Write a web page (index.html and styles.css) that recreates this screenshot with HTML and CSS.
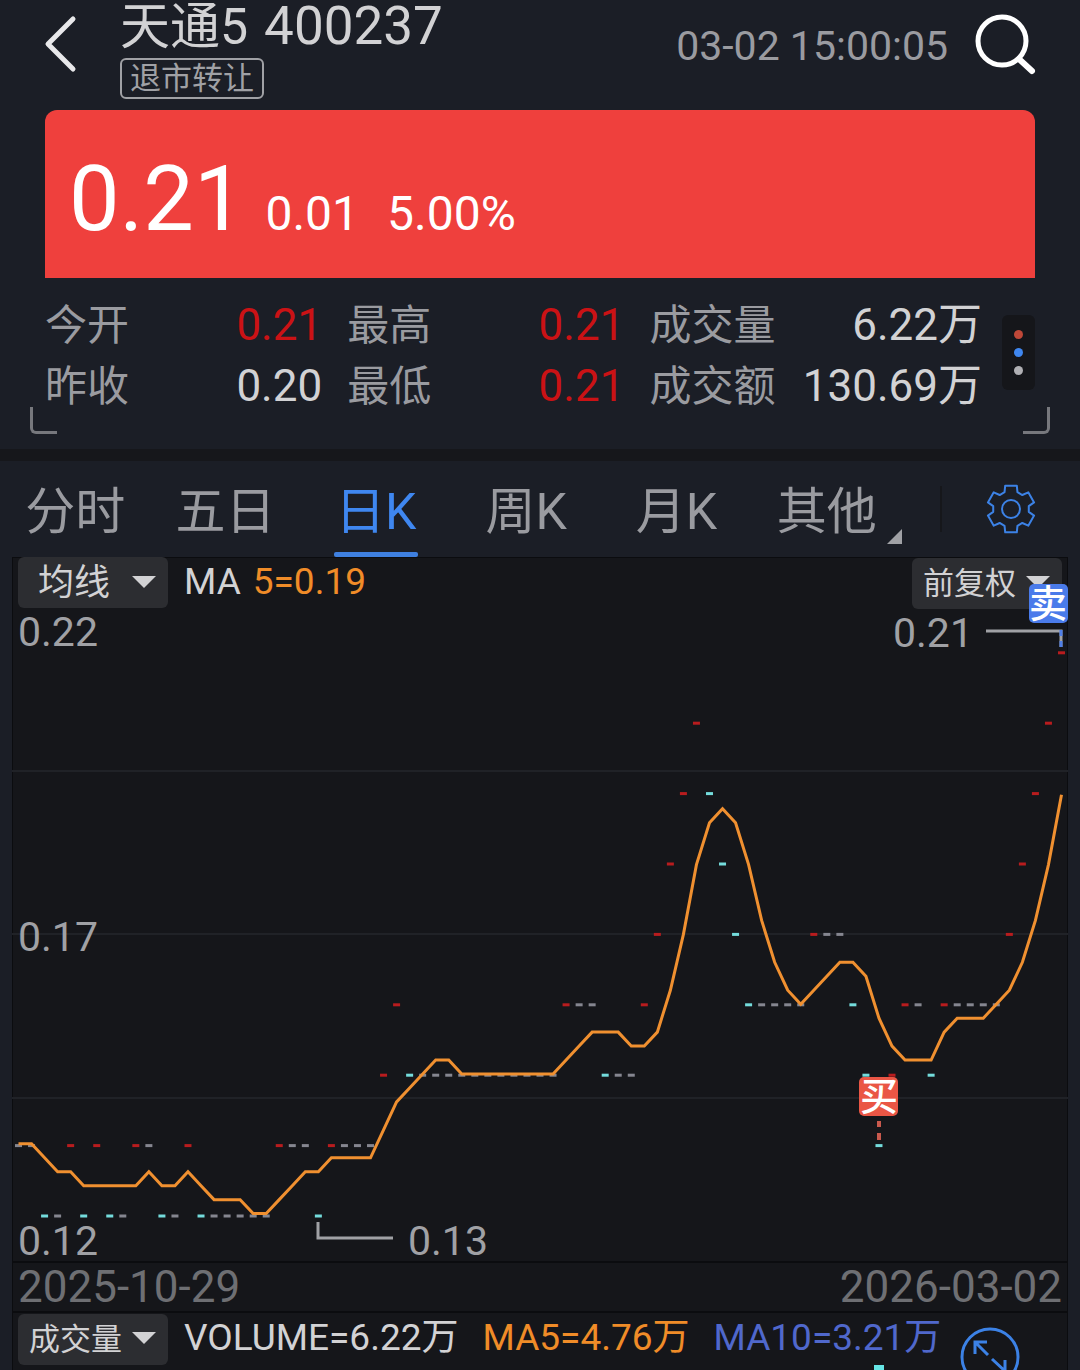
FILE: index.html
```html
<!DOCTYPE html>
<html lang="zh-CN">
<head>
    <meta charset="UTF-8">
    <meta name="viewport" content="width=device-width, initial-scale=1.0">
    <title>天通5 400237</title>
    <link rel="stylesheet" href="styles.css">
</head>
<body>
    <div class="app">
        <header class="top-bar">
            <button class="icon-btn" aria-label="返回">
                <svg width="34" height="60" viewBox="0 0 34 60"><path d="M29 5 L4 30 L29 55" fill="none" stroke="#e8e8ea" stroke-width="5" stroke-linecap="round" stroke-linejoin="round"/></svg>
            </button>
            <div class="stock">
                <h1><span class="stock-name">天通5</span> <span class="stock-code">400237</span></h1>
                <span class="tag">退市转让</span>
            </div>
            <time class="quote-time">03-02 15:00:05</time>
            <button class="icon-btn" aria-label="搜索">
                <svg width="62" height="62" viewBox="0 0 62 62" fill="none" stroke="#fff" stroke-linecap="round"><circle cx="28" cy="27" r="24" stroke-width="5"/><path d="M45 45 L58 57" stroke-width="6"/></svg>
            </button>
        </header>

        <section class="price-card">
            <strong>0.21</strong>
            <span>0.01</span>
            <span class="percent">5.00%</span>
        </section>

        <section class="stats">
            <dl>
                <div><dt>今开</dt><dd class="up">0.21</dd></div>
                <div><dt>最高</dt><dd class="up">0.21</dd></div>
                <div><dt>成交量</dt><dd>6.22万</dd></div>
                <div><dt>昨收</dt><dd>0.20</dd></div>
                <div><dt>最低</dt><dd class="up">0.21</dd></div>
                <div><dt>成交额</dt><dd>130.69万</dd></div>
            </dl>
            <button class="more" aria-label="更多"><i></i><i></i><i></i></button>
        </section>

        <nav class="periods">
            <div class="tabs">
                <button>分时</button>
                <button>五日</button>
                <button class="active">日K</button>
                <button>周K</button>
                <button>月K</button>
                <button class="has-menu">其他</button>
            </div>
            <button class="settings" aria-label="设置">
                <svg width="52" height="52" viewBox="-26 -26 52 52" fill="none" stroke="#3c82e6" stroke-width="2" stroke-linejoin="round">
                    <circle r="9"/>
                    <path id="gear"/>
                </svg>
            </button>
        </nav>

        <main class="chart">
            <div class="pane">
                <div class="toolbar">
                    <span class="picker">
                        <select aria-label="主图指标"><option>均线</option></select>
                    </span>
                    <span class="legend">MA</span>
                    <span class="legend ma5">5=0.19</span>
                    <span class="picker adjust">
                        <select aria-label="复权"><option>前复权</option></select>
                    </span>
                </div>
                <svg class="plot" viewBox="0 0 1056 704">
                    <g class="grid">
                        <path d="M0 214H1056M0 377H1056M0 541H1056"/>
                    </g>
                    <g class="axis">
                        <text x="6" y="89">0.22</text>
                        <text x="6" y="394">0.17</text>
                        <text x="6" y="698">0.12</text>
                        <text x="881" y="90">0.21</text>
                        <text x="396" y="698">0.13</text>
                    </g>
                    <g id="candles"></g>
                    <polyline id="ma5"/>
                    <path class="pointer" d="M974 74H1049V90M306 665V681H381"/>
                    <path d="M1049 73V79M1049 84V90" stroke="#4f7fe8" stroke-width="3"/>
                    <path d="M867 564V570M867 576V583" stroke="#c9594d" stroke-width="4"/>
                    <g class="trade">
                        <rect x="1017" y="27" width="39" height="39" rx="5" fill="#4a7bea"/>
                        <text x="1036" y="60">卖</text>
                        <rect x="847" y="520" width="39" height="39" rx="5" fill="#ea5645"/>
                        <text x="867" y="553">买</text>
                    </g>
                </svg>
            </div>
            <div class="dates"><time>2025-10-29</time><time>2026-03-02</time></div>
            <div class="pane">
                <div class="toolbar">
                    <span class="picker small">
                        <select aria-label="副图指标"><option>成交量</option></select>
                    </span>
                    <span class="legend wide">VOLUME=6.22万</span>
                    <span class="legend wide ma5">MA5=4.76万</span>
                    <span class="legend ma10">MA10=3.21万</span>
                    <button class="expand" aria-label="全屏">
                        <svg width="60" height="60" viewBox="0 0 60 60" fill="none" stroke="#3c82e6" stroke-width="3">
                            <circle cx="30" cy="30" r="28"/>
                            <path d="M28 28L16 16M15 27V15H27M32 32L45 44M45 33V45H33"/>
                        </svg>
                    </button>
                </div>
                <svg class="plot" viewBox="0 0 1056 200"><rect x="862" y="52" width="10" height="148" fill="#66e6e6"/></svg>
            </div>
        </main>
    </div>
    <script src="chart.js"></script>
</body>
</html>
```
FILE: styles.css
```css
*,
*::before,
*::after {
    box-sizing: border-box;
}
body {
    margin: 0;
    background-color: #1b1e26;
    color: #d2d2d4;
    font-family: Roboto, "Noto Sans CJK SC", sans-serif;
}
button {
    padding: 0;
    border: 0;
    background: none;
    color: inherit;
    font: inherit;
    cursor: pointer;
}
svg {
    display: block;
}
.app {
    display: flex;
    flex-direction: column;
    height: 100vh;
    overflow: hidden;
}
.app > * {
    flex-shrink: 0;
}

/* header */
.top-bar {
    display: flex;
    align-items: flex-start;
    padding: 0 44px;
    height: 110px;
}
.top-bar .icon-btn {
    margin-top: 14px;
}
.stock {
    flex: 1;
    margin-left: 42px;
}
.stock h1 {
    display: flex;
    align-items: baseline;
    gap: 16px;
    margin: 0;
    height: 58px;
    line-height: 52px;
    font-weight: 400;
}
.stock-name {
    font-size: 50px;
}
.stock-code {
    font-size: 53px;
}
.tag {
    display: inline-block;
    padding: 0 8px;
    border: 2px solid #a0a1a5;
    border-radius: 6px;
    color: #a0a1a5;
    font-size: 31px;
    line-height: 37px;
}
.quote-time {
    margin: 22px 26px 0 0;
    color: #9a9ba0;
    font-size: 41px;
    line-height: 48px;
}

/* price */
.price-card {
    display: flex;
    align-items: baseline;
    margin: 0 45px;
    padding: 36px 24px 10px;
    border-radius: 12px 12px 0 0;
    background-color: #ef403d;
    color: #fff;
    font-size: 48px;
    line-height: 108px;
}
.price-card strong {
    margin-right: 21px;
    font-size: 90px;
    font-weight: 400;
}
.price-card .percent {
    margin-left: 28px;
}

.stats {
    position: relative;
    display: flex;
    align-items: center;
    gap: 20px;
    margin: 0 30px;
    padding: 16px 15px 24px;
    height: 156px;
}
.stats::before,
.stats::after {
    content: "";
    position: absolute;
    bottom: 0;
    width: 27px;
    height: 27px;
    border-bottom: 3px solid #77787d;
}
.stats::before {
    left: 0;
    border-left: 3px solid #77787d;
    border-bottom-left-radius: 6px;
}
.stats::after {
    right: 0;
    border-right: 3px solid #77787d;
    border-bottom-right-radius: 6px;
}
.stats dl {
    flex: 1;
    display: grid;
    grid-template-columns: 5fr 5fr 6fr;
    column-gap: 25px;
    margin: 0;
    padding-top: 8px;
}
.stats dl div {
    display: flex;
    justify-content: space-between;
    align-items: baseline;
    line-height: 60px;
}
.stats dt {
    color: #9a9ba0;
    font-size: 42px;
}
.stats dd {
    margin: 0;
    font-size: 44px;
}
.stats .up {
    color: #cb1215;
}
.more {
    display: flex;
    flex-direction: column;
    align-items: center;
    justify-content: center;
    gap: 9px;
    width: 33px;
    height: 75px;
    border-radius: 6px;
    background-color: #15161a;
}
.more i {
    width: 9px;
    height: 9px;
    border-radius: 50%;
    background-color: #b0b0b4;
}
.more i:nth-child(1) {
    background-color: #bf4838;
}
.more i:nth-child(2) {
    background-color: #3f87f0;
}

/* period tabs */
.periods {
    display: flex;
    align-items: center;
    margin-top: 15px;
    border-top: 12px solid #16171b;
    height: 108px;
}
.tabs {
    flex: 1;
    display: grid;
    grid-template-columns: repeat(6, 1fr);
    height: 100%;
    padding-right: 38px;
    color: #9a9ba0;
    font-size: 50px;
}
.tabs button {
    position: relative;
    padding-bottom: 4px;
}
.tabs .active {
    color: #3f87f0;
}
.tabs .active::after {
    content: "";
    position: absolute;
    left: 50%;
    bottom: 0;
    width: 84px;
    height: 5px;
    margin-left: -42px;
    border-radius: 2px;
    background-color: #3f80e0;
}
.tabs .has-menu::after {
    content: "";
    position: absolute;
    right: 0;
    bottom: 13px;
    border-left: 15px solid transparent;
    border-bottom: 15px solid #a0a1a5;
}
.settings {
    display: flex;
    align-items: center;
    justify-content: center;
    width: 140px;
    height: 46px;
    border-left: 2px solid #16171b;
}

/* chart */
.app .chart {
    flex: 1;
    display: flex;
    flex-direction: column;
    margin: 0 12px;
    background-color: #15161a;
    box-shadow: inset 0 0 0 1px #0b0c0f;
}
.pane {
    display: grid;
    grid-template-columns: minmax(0, 1fr);
}
.toolbar,
.plot {
    grid-area: 1 / 1;
}
.toolbar {
    display: flex;
    align-items: flex-start;
    padding: 0 6px;
    font-size: 37px;
    line-height: 50px;
}
.picker {
    position: relative;
    height: 51px;
    margin-right: 16px;
}
.picker select {
    appearance: none;
    width: 150px;
    height: 51px;
    padding: 0 0 0 20px;
    border: 0;
    border-radius: 6px;
    background-color: #2c2d31;
    color: #d2d2d4;
    font-family: inherit;
    font-size: 36px;
}
.picker::after {
    content: "";
    position: absolute;
    right: 12px;
    top: 19px;
    border: 12px solid transparent;
    border-top-color: #d2d2d4;
    border-bottom: 0;
    pointer-events: none;
}
.picker.adjust {
    margin: 0 0 0 auto;
}
.picker.adjust select,
.picker.small select {
    padding-left: 11px;
    font-size: 31px;
}
.legend {
    margin-right: 12px;
    white-space: nowrap;
}
.legend.wide {
    margin-right: 24px;
}
.ma5 {
    color: #f08c28;
}
.ma10 {
    color: #5068cc;
}
/* markers are drawn over the toolbar */
.plot {
    position: relative;
    width: 100%;
    overflow: visible;
    pointer-events: none;
}
.grid path {
    stroke: #202227;
    stroke-width: 2;
}
.axis {
    fill: #a0a1a5;
    font-size: 41px;
}
#ma5 {
    fill: none;
    stroke: #f09030;
    stroke-width: 3;
}
.pointer {
    fill: none;
    stroke: #a0a1a5;
    stroke-width: 3;
}
.trade text {
    fill: #fff;
    font-size: 38px;
    font-weight: 500;
    text-anchor: middle;
}
.dates {
    display: flex;
    justify-content: space-between;
    padding: 0 6px;
    border: solid #0b0c0f;
    border-width: 2px 0;
    color: #6e6f73;
    font-size: 44px;
    line-height: 48px;
}
.expand {
    flex-shrink: 0;
    margin: 14px 42px 0 auto;
}
```
FILE: chart.js
```js
// closing prices in cents, oldest first
const closes = [
    14, 14, 13, 13, 14, 13, 14, 13, 13, 14, 14, 13, 13, 14, 13, 13, 13, 13, 13, 13,
    14, 14, 14, 13, 14, 14, 14, 14, 15, 16, 15, 15, 15, 15, 15, 15, 15, 15, 15, 15,
    15, 15, 16, 16, 16, 15, 15, 15, 16, 17, 18, 19, 20, 19, 18, 17, 16, 16, 16, 16,
    16, 17, 17, 17, 16, 15, 14, 15, 16, 16, 15, 16, 16, 16, 16, 16, 17, 18, 19, 20, 21
];
const before = [14, 14, 14, 14];
const all = before.concat(closes);
const step = 1043 / (closes.length - 1);

let candles = '';
const points = [];
closes.forEach((price, i) => {
    const x = 6.5 + i * step;
    const prev = all[i + 3];
    const color = price > prev ? '#b81c1e' : price < prev ? '#74dcdc' : '#858690';
    const y = 659 - (price - 13) * 70.4;
    candles += `<rect x="${x - 3.5}" y="${y - 1.5}" width="7" height="3" fill="${color}"/>`;

    const avg = all.slice(i, i + 5).reduce((a, b) => a + b) / 5;
    points.push(`${x},${656.6 - (avg - 13) * 69.8}`);
});
document.getElementById('candles').innerHTML = candles;
document.getElementById('ma5').setAttribute('points', points.join(' '));

// gear outline: six teeth
const gear = [];
for (let t = 0; t < 6; t++) {
    [[-21, 18], [-14, 24], [14, 24], [21, 18]].forEach(([deg, r]) => {
        const a = (t * 60 - 90 + deg) * Math.PI / 180;
        gear.push(`${r * Math.cos(a)} ${r * Math.sin(a)}`);
    });
}
document.getElementById('gear').setAttribute('d', 'M' + gear.join('L') + 'Z');
```
